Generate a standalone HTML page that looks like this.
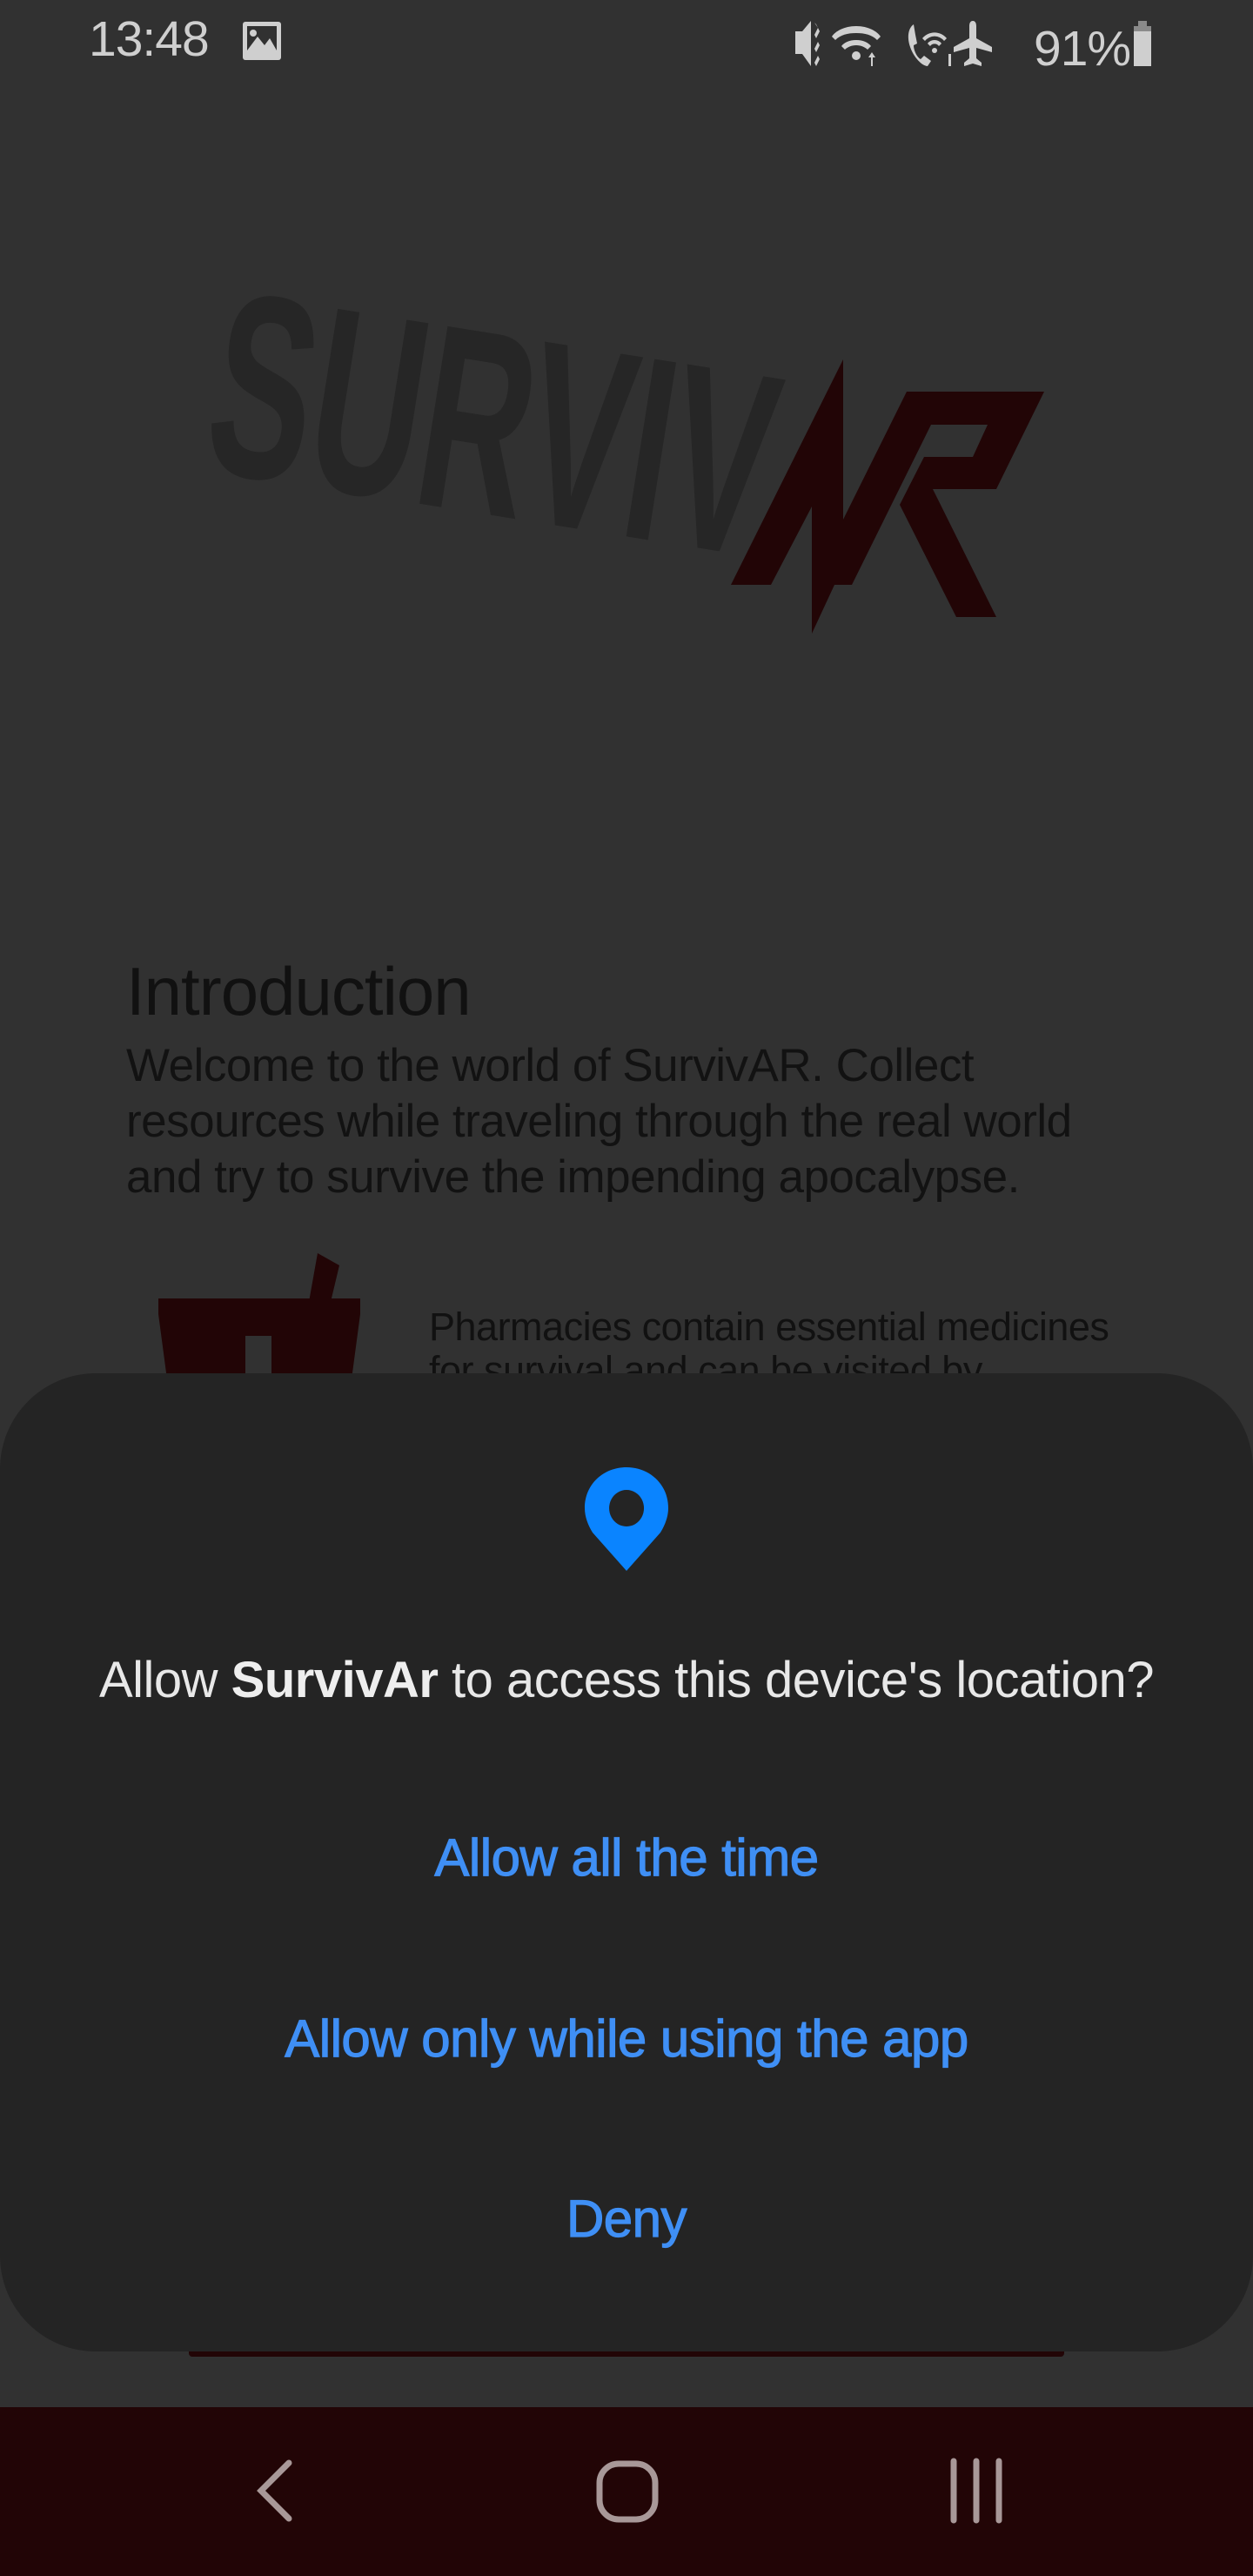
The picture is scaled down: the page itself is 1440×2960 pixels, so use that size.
<!DOCTYPE html>
<html><head><meta charset="utf-8"><style>
*{margin:0;padding:0;box-sizing:border-box}
body{width:1440px;height:2960px;background:#313131;position:relative;overflow:hidden;font-family:"Liberation Sans",sans-serif}
.abs{position:absolute}
.st{color:#cfcfcf;font-size:57px;top:12px;letter-spacing:-1px}
.intro{left:145px;top:1094px;font-size:78px;color:#111;letter-spacing:-1px}
.body{left:145px;top:1193px;font-size:53px;line-height:64px;color:#121212;width:1300px;letter-spacing:-0.5px}
.ph{left:493px;top:1500px;font-size:45px;line-height:50px;color:#111;letter-spacing:-0.5px}
.dlg{left:0;top:1578px;width:1440px;height:1124px;background:#242424;border-radius:110px}
.q{left:0;width:1440px;text-align:center;top:1897px;font-size:58px;color:#e8e8e8;letter-spacing:-0.5px}
.btn{left:0;width:1440px;text-align:center;font-size:60px;color:#3f8ff5;letter-spacing:-0.5px;-webkit-text-stroke:1.2px #3f8ff5}
.nav{left:0;top:2766px;width:1440px;height:194px;background:#220506}
</style></head><body>
<div class="abs st" style="left:102px">13:48</div>
<svg class="abs" style="left:278px;top:24px" width="48" height="46" viewBox="0 0 48 46"><rect x="1" y="1" width="44" height="44" rx="3" fill="#cfcfcf"/><rect x="6" y="6" width="34" height="28" fill="#313131"/><circle cx="13" cy="14" r="4" fill="#cfcfcf"/><path d="M6 34 L18 18 L26 28 L32 20 L40 34 Z" fill="#cfcfcf"/></svg>
<svg class="abs" style="left:910px;top:20px" width="440" height="60" viewBox="0 0 440 60">
<g fill="#cfcfcf">
<path d="M4 16h8l10-12v52L12 42H4z"/><path d="M26 6l4 6-4 8 4 8-4 8 4 8-4 8 2 4 4-8-4-8 4-8-4-8 4-8-4-8z"/>
<path d="M74 10c14 0 24 6 28 12l-4 4c-6-6-14-8-24-8s-18 2-24 8l-4-4c4-6 14-12 28-12z"/>
<path d="M74 26c8 0 14 3 17 7l-4 4c-3-3-8-5-13-5s-10 2-13 5l-4-4c3-4 9-7 17-7z"/>
<circle cx="74" cy="44" r="5"/>
<path d="M92 40l4 6h-3v10h-2V46h-3z"/>
<path d="M140 8c-6 4-8 14-4 26s14 22 20 22l4-6-8-6-4 4c-4-2-8-10-8-16l4-2-2-10z"/>
<path d="M156 30a10 10 0 0 1 16 0l-3 3a6 6 0 0 0-10 0z"/><path d="M150 24a18 18 0 0 1 28 0l-3 3a14 14 0 0 0-22 0z"/><circle cx="164" cy="38" r="3"/>
<path d="M180 42h3v14h-3z"/>
<path d="M208 4c3 0 4 3 4 6v14l18 10v6l-18-5v12l6 5v4l-10-3-10 3v-4l6-5V35l-18 5v-6l18-10V10c0-3 1-6 4-6z"/>
</g>
<text x="278" y="55" font-family="Liberation Sans" font-size="57" fill="#cfcfcf" letter-spacing="-1">91%</text>
<rect x="398" y="4" width="10" height="6" fill="#8a8a8a"/><rect x="393" y="10" width="20" height="6" fill="#8a8a8a"/><rect x="393" y="16" width="20" height="40" fill="#cfcfcf"/>
</svg>

<svg class="abs" style="left:0;top:0" width="1440" height="800" viewBox="0 0 1440 800">
<text x="240" y="590" font-family="Liberation Sans" font-weight="bold" font-size="300" fill="#262626" transform="rotate(9 560 500)" textLength="650" lengthAdjust="spacingAndGlyphs">SURVIV</text>
<path fill="#220506" d="M840 672 L969 413 L969 597 L1042 450 L1200 450 L1145 562 L1072 562 L1145 709 L1099 709 L1034 580 L1062 525 L1118 525 L1135 488 L1070 488 L979 672 L959 672 L933 728 L933 582 L886 672 Z"/>
</svg>

<div class="abs intro">Introduction</div>
<div class="abs body">Welcome to the world of SurvivAR. Collect<br>resources while traveling through the real world<br>and try to survive the impending apocalypse.</div>

<svg class="abs" style="left:180px;top:1440px" width="240" height="160" viewBox="0 0 240 160"><g fill="#220506"><path d="M185 0 L210 14 L200 56 L175 56 Z"/><path d="M2 52 H234 V70 L222 160 H14 L2 70 Z"/></g><rect x="102" y="95" width="30" height="65" fill="#313131"/></svg>
<div class="abs ph">Pharmacies contain essential medicines<br>for survival and can be visited by</div>

<div class="abs" style="left:217px;top:2690px;width:1006px;height:18px;background:#220506;border-radius:4px"></div>
<div class="abs dlg"></div>
<svg class="abs" style="left:670px;top:1685px" width="100" height="122" viewBox="0 0 100 122"><path fill-rule="evenodd" fill="#0a84ff" d="M50 1C24 1 2 20 2 48c0 10 4 20 9 28l39 44 39-44c5-8 9-18 9-28C98 20 76 1 50 1zM50 27a20 21 0 1 0 0.1 0z"/></svg>
<div class="abs q">Allow <b style="color:#eee">SurvivAr</b> to access this device's location?</div>
<div class="abs btn" style="top:2100px">Allow all the time</div>
<div class="abs btn" style="top:2308px">Allow only while using the app</div>
<div class="abs btn" style="top:2515px">Deny</div>

<div class="abs nav"></div>
<svg class="abs" style="left:0;top:2766px" width="1440" height="194" viewBox="0 0 1440 194"><g stroke="#a89898" stroke-width="7" fill="none" stroke-linecap="round"><path d="M332 64 L300 96 L332 128"/><rect x="689" y="65" width="64" height="64" rx="22"/><path d="M1096 62V130M1122 62V130M1148 62V130"/></g></svg>
</body></html>
